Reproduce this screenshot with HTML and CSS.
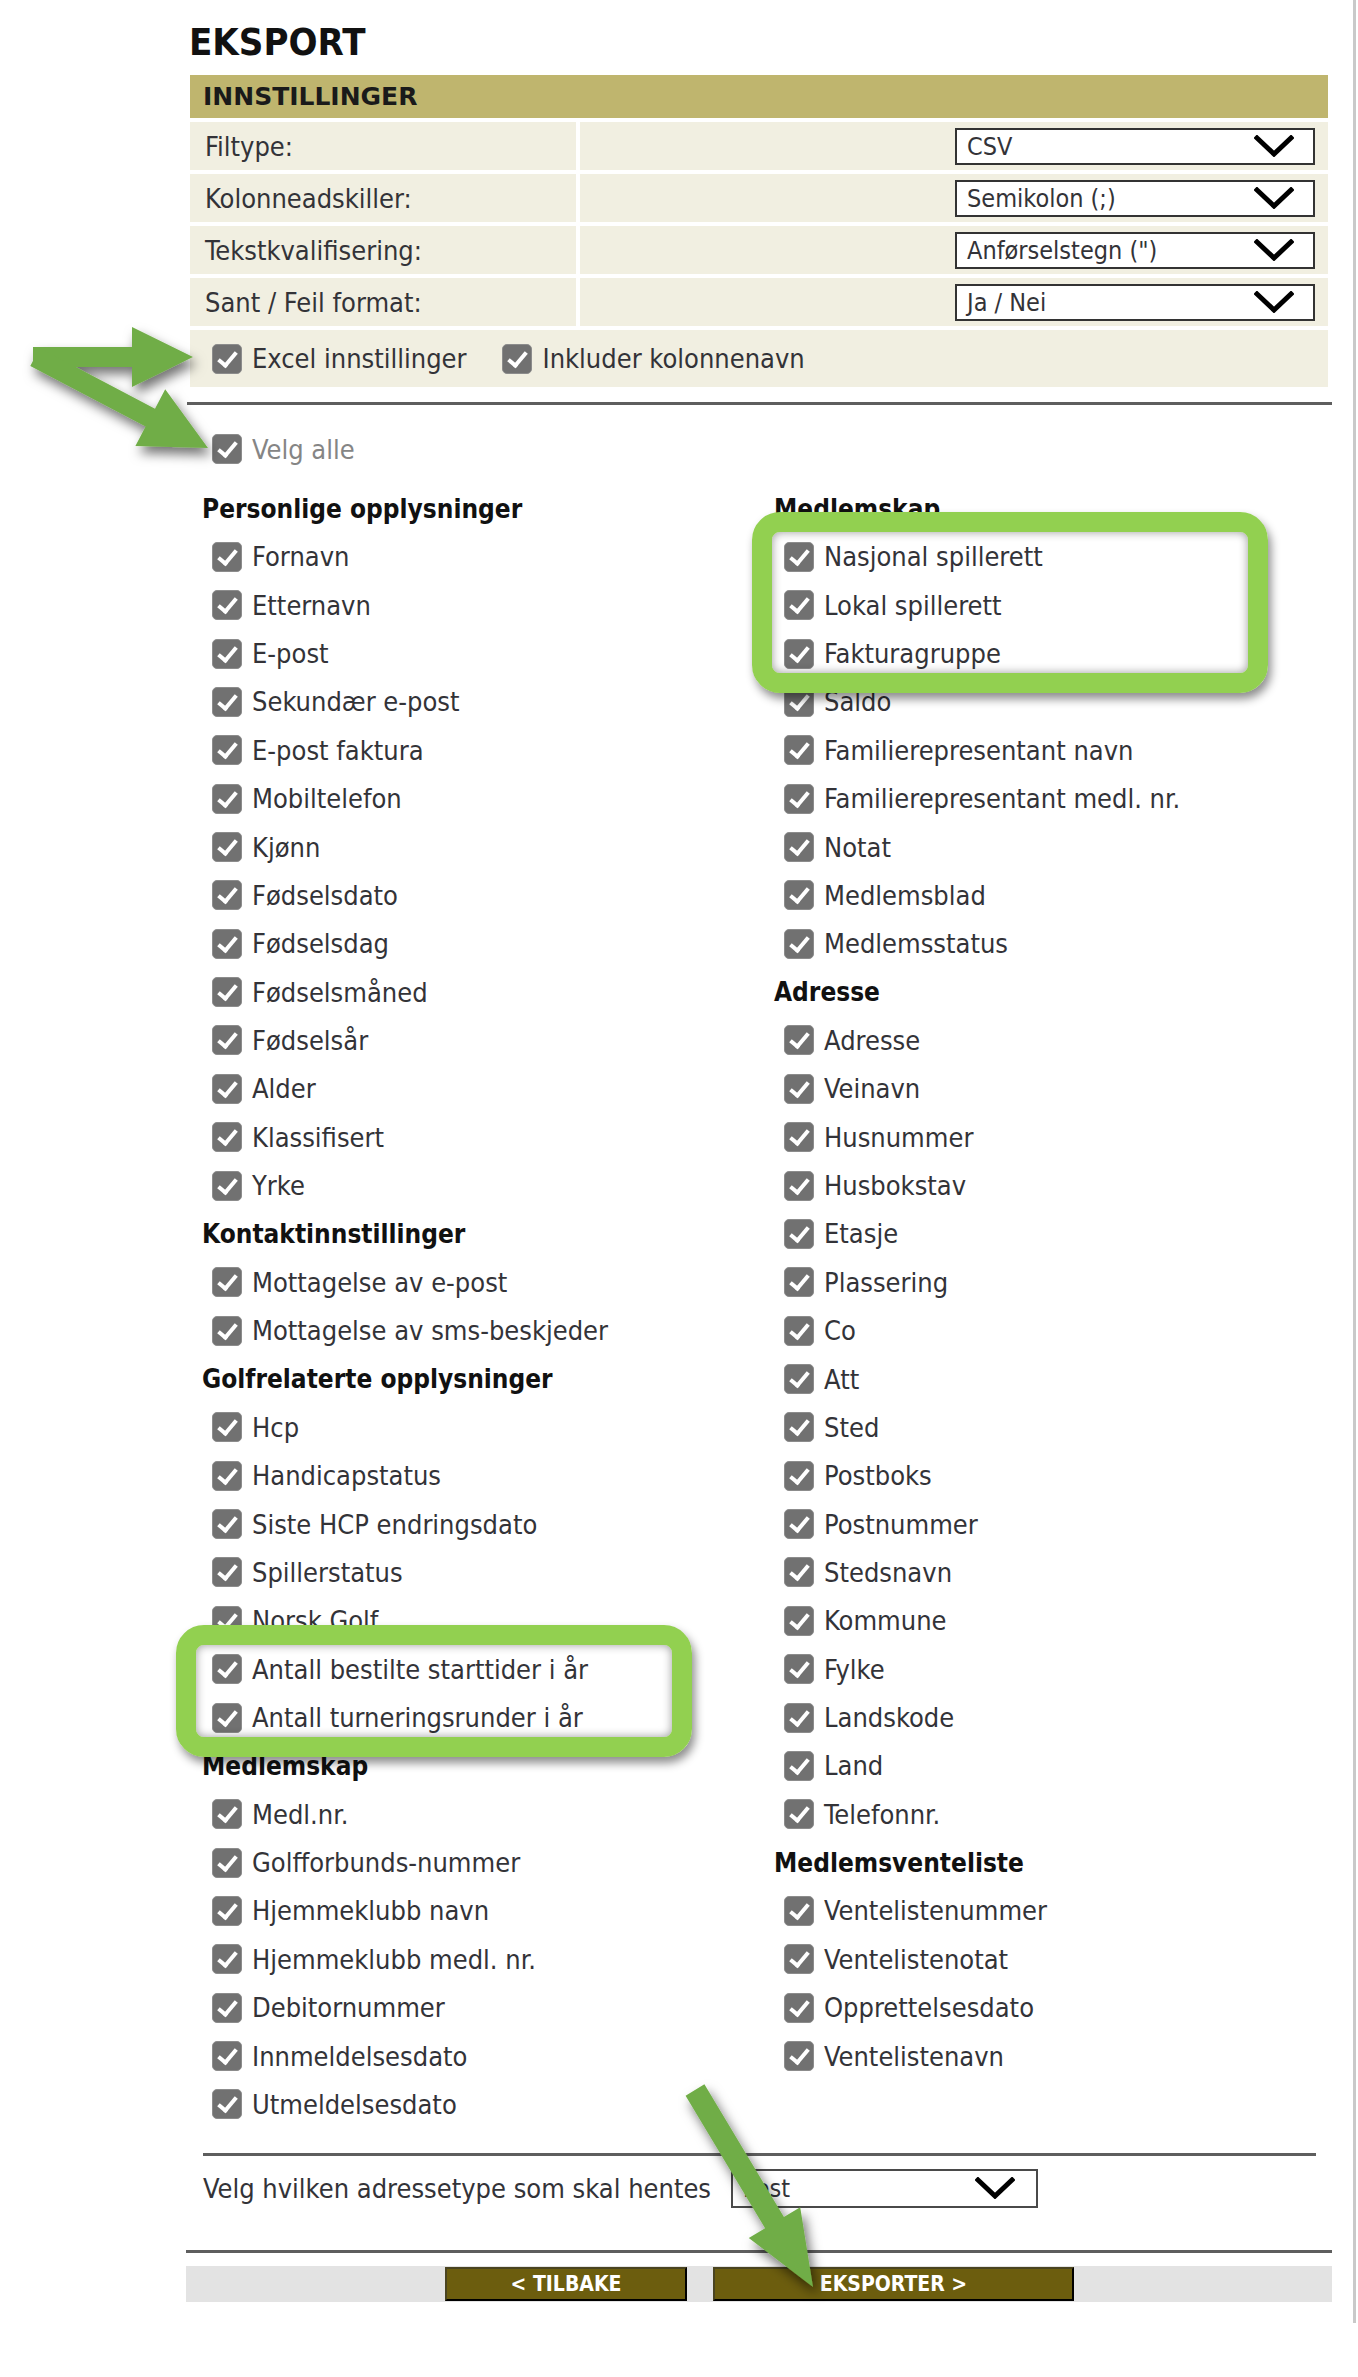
FILE: index.html
```html
<!DOCTYPE html>
<html lang="no">
<head>
<meta charset="utf-8">
<title>Eksport</title>
<link rel="stylesheet" href="styles.css">
</head>
<body>
<div class="frame">
  <div class="page">
    <h1 class="title">EKSPORT</h1>
    <div class="settings">
      <div class="s-head">INNSTILLINGER</div>
      <div class="s-label">Filtype:</div>
      <div class="s-value"><div class="select"><span>CSV</span><svg class="chev" viewBox="0 0 40 22"><polyline points="3,3 20,19 37,3"/></svg></div></div>
      <div class="s-label">Kolonneadskiller:</div>
      <div class="s-value"><div class="select"><span>Semikolon (;)</span><svg class="chev" viewBox="0 0 40 22"><polyline points="3,3 20,19 37,3"/></svg></div></div>
      <div class="s-label">Tekstkvalifisering:</div>
      <div class="s-value"><div class="select"><span>Anførselstegn (")</span><svg class="chev" viewBox="0 0 40 22"><polyline points="3,3 20,19 37,3"/></svg></div></div>
      <div class="s-label">Sant / Feil format:</div>
      <div class="s-value"><div class="select"><span>Ja / Nei</span><svg class="chev" viewBox="0 0 40 22"><polyline points="3,3 20,19 37,3"/></svg></div></div>
      <div class="s-opts">
        <div class="opt"><span class="cb"></span>Excel innstillinger</div>
        <div class="opt"><span class="cb"></span>Inkluder kolonnenavn</div>
      </div>
    </div>
    <div class="rule rule-top"></div>
    <div class="item all"><span class="cb"></span>Velg alle</div>
    <div class="cols">
      <div class="col">
        <div class="heading">Personlige opplysninger</div>
        <div class="item"><span class="cb"></span>Fornavn</div>
        <div class="item"><span class="cb"></span>Etternavn</div>
        <div class="item"><span class="cb"></span>E-post</div>
        <div class="item"><span class="cb"></span>Sekundær e-post</div>
        <div class="item"><span class="cb"></span>E-post faktura</div>
        <div class="item"><span class="cb"></span>Mobiltelefon</div>
        <div class="item"><span class="cb"></span>Kjønn</div>
        <div class="item"><span class="cb"></span>Fødselsdato</div>
        <div class="item"><span class="cb"></span>Fødselsdag</div>
        <div class="item"><span class="cb"></span>Fødselsmåned</div>
        <div class="item"><span class="cb"></span>Fødselsår</div>
        <div class="item"><span class="cb"></span>Alder</div>
        <div class="item"><span class="cb"></span>Klassifisert</div>
        <div class="item"><span class="cb"></span>Yrke</div>
        <div class="heading">Kontaktinnstillinger</div>
        <div class="item"><span class="cb"></span>Mottagelse av e-post</div>
        <div class="item"><span class="cb"></span>Mottagelse av sms-beskjeder</div>
        <div class="heading">Golfrelaterte opplysninger</div>
        <div class="item"><span class="cb"></span>Hcp</div>
        <div class="item"><span class="cb"></span>Handicapstatus</div>
        <div class="item"><span class="cb"></span>Siste HCP endringsdato</div>
        <div class="item"><span class="cb"></span>Spillerstatus</div>
        <div class="item"><span class="cb"></span>Norsk Golf</div>
        <div class="item"><span class="cb"></span>Antall bestilte starttider i år</div>
        <div class="item"><span class="cb"></span>Antall turneringsrunder i år</div>
        <div class="heading">Medlemskap</div>
        <div class="item"><span class="cb"></span>Medl.nr.</div>
        <div class="item"><span class="cb"></span>Golfforbunds-nummer</div>
        <div class="item"><span class="cb"></span>Hjemmeklubb navn</div>
        <div class="item"><span class="cb"></span>Hjemmeklubb medl. nr.</div>
        <div class="item"><span class="cb"></span>Debitornummer</div>
        <div class="item"><span class="cb"></span>Innmeldelsesdato</div>
        <div class="item"><span class="cb"></span>Utmeldelsesdato</div>
      </div>
      <div class="col">
        <div class="heading">Medlemskap</div>
        <div class="item"><span class="cb"></span>Nasjonal spillerett</div>
        <div class="item"><span class="cb"></span>Lokal spillerett</div>
        <div class="item"><span class="cb"></span>Fakturagruppe</div>
        <div class="item"><span class="cb"></span>Saldo</div>
        <div class="item"><span class="cb"></span>Familierepresentant navn</div>
        <div class="item"><span class="cb"></span>Familierepresentant medl. nr.</div>
        <div class="item"><span class="cb"></span>Notat</div>
        <div class="item"><span class="cb"></span>Medlemsblad</div>
        <div class="item"><span class="cb"></span>Medlemsstatus</div>
        <div class="heading">Adresse</div>
        <div class="item"><span class="cb"></span>Adresse</div>
        <div class="item"><span class="cb"></span>Veinavn</div>
        <div class="item"><span class="cb"></span>Husnummer</div>
        <div class="item"><span class="cb"></span>Husbokstav</div>
        <div class="item"><span class="cb"></span>Etasje</div>
        <div class="item"><span class="cb"></span>Plassering</div>
        <div class="item"><span class="cb"></span>Co</div>
        <div class="item"><span class="cb"></span>Att</div>
        <div class="item"><span class="cb"></span>Sted</div>
        <div class="item"><span class="cb"></span>Postboks</div>
        <div class="item"><span class="cb"></span>Postnummer</div>
        <div class="item"><span class="cb"></span>Stedsnavn</div>
        <div class="item"><span class="cb"></span>Kommune</div>
        <div class="item"><span class="cb"></span>Fylke</div>
        <div class="item"><span class="cb"></span>Landskode</div>
        <div class="item"><span class="cb"></span>Land</div>
        <div class="item"><span class="cb"></span>Telefonnr.</div>
        <div class="heading">Medlemsventeliste</div>
        <div class="item"><span class="cb"></span>Ventelistenummer</div>
        <div class="item"><span class="cb"></span>Ventelistenotat</div>
        <div class="item"><span class="cb"></span>Opprettelsesdato</div>
        <div class="item"><span class="cb"></span>Ventelistenavn</div>
      </div>
    </div>
    <div class="rule rule-mid"></div>
    <div class="addr">
      <span>Velg hvilken adressetype som skal hentes</span>
      <div class="select select-small"><span>Post</span><svg class="chev" viewBox="0 0 40 22"><polyline points="3,3 20,19 37,3"/></svg></div>
    </div>
    <div class="rule rule-bot"></div>
    <div class="buttons">
      <button class="btn btn-back">&lt; TILBAKE</button>
      <button class="btn btn-go">EKSPORTER &gt;</button>
    </div>
  </div>
</div>

<div class="mark mark-right"></div>
<div class="mark mark-left"></div>

<svg class="arrows" width="1358" height="2377" viewBox="0 0 1358 2377">
  <defs>
    <filter id="sh" x="-20%" y="-20%" width="140%" height="140%">
      <feDropShadow dx="4" dy="7" stdDeviation="6" flood-color="#000" flood-opacity="0.55"/>
    </filter>
  </defs>
  <g fill="#70ad47" filter="url(#sh)">
    <polygon points="33,347 132,347 132,327 193,357 132,387 132,367 33,367"/>
    <polygon points="39.7,348.1 155,408.7 165.2,389.2 208,448 135.4,446 145.6,426.5 30.3,365.9"/>
    <polygon points="704.4,2084.3 783.9,2216.9 800.2,2207.2 813,2287 748.8,2238 765.1,2228.3 685.6,2095.7"/>
  </g>
</svg>
</body>
</html>
```

FILE: styles.css
```css
html, body {
  margin: 0;
  padding: 0;
  background: #ffffff;
}

body {
  position: relative;
  font-family: "DejaVu Sans Condensed", "DejaVu Sans", sans-serif;
  font-stretch: condensed;
  color: #333338;
}

.frame {
  width: 1353px;
  min-height: 2323px;
  border-right: 3px solid #c9c9c9;
}

.page {
  margin-left: 186px;
  width: 1146px;
  padding-top: 20px;
}

.title {
  margin: 0 0 11px 3px;
  font-size: 38px;
  line-height: 44px;
  font-weight: bold;
  color: #111111;
}

/* settings table */
.settings {
  display: grid;
  grid-template-columns: 386px 1fr;
  gap: 4px;
  margin: 0 4px;
}

.s-head {
  grid-column: 1 / -1;
  height: 43px;
  background: #bfb56e;
  display: flex;
  align-items: center;
  padding-left: 13px;
  font-family: "DejaVu Sans", sans-serif;
  font-stretch: normal;
  font-size: 25px;
  font-weight: bold;
  color: #1a1a1a;
}

.s-label {
  height: 48px;
  background: #f1efe1;
  display: flex;
  align-items: center;
  padding-left: 15px;
  font-size: 27px;
}

.s-value {
  height: 48px;
  background: #f1efe1;
  display: flex;
  align-items: center;
  justify-content: flex-end;
  padding-right: 13px;
}

.select {
  width: 360px;
  height: 37px;
  box-sizing: border-box;
  border: 2px solid #333333;
  background: #ffffff;
  display: flex;
  align-items: center;
  justify-content: space-between;
  padding: 0 19px 0 10px;
  font-size: 25px;
  color: #333338;
}

.chev {
  width: 40px;
  height: 22px;
  flex: none;
}

.chev polyline {
  fill: none;
  stroke: #000000;
  stroke-width: 5;
  stroke-linecap: square;
  stroke-linejoin: miter;
}

.s-opts {
  grid-column: 1 / -1;
  height: 57px;
  background: #f1efe1;
  display: flex;
  align-items: center;
  padding-left: 22px;
  gap: 36px;
}

.opt {
  display: flex;
  align-items: center;
  gap: 10px;
  font-size: 27px;
}

/* checkbox */
.cb {
  width: 30px;
  height: 30px;
  flex: none;
  box-sizing: border-box;
  background: #717171;
  border: 1px solid #8c8c8c;
  border-radius: 5px;
  position: relative;
}

.cb::after {
  content: "";
  position: absolute;
  left: 9px;
  top: 3px;
  width: 7px;
  height: 15px;
  border: solid #ffffff;
  border-width: 0 4px 4px 0;
  transform: rotate(40deg);
}

/* rules */
.rule {
  height: 3px;
  background: #5e5e5e;
}

.rule-top {
  margin-top: 15px;
  margin-left: 1px;
}

.rule-mid {
  margin-top: 24px;
  margin-left: 17px;
  width: 1113px;
}

.rule-bot {
  margin-top: 42px;
}

/* lists */
.item {
  height: 48.36px;
  display: flex;
  align-items: center;
  gap: 10px;
  padding-left: 10px;
  font-size: 27px;
  white-space: nowrap;
}

.all {
  margin-top: 20px;
  padding-left: 26px;
  color: #858585;
}

.cols {
  display: grid;
  grid-template-columns: 572px 1fr;
  margin-top: 11px;
  padding-left: 16px;
}

.heading {
  height: 48.36px;
  display: flex;
  align-items: center;
  font-size: 26px;
  font-weight: bold;
  color: #111111;
  white-space: nowrap;
}

/* address type */
.addr {
  margin-top: 13px;
  height: 39px;
  display: flex;
  align-items: center;
  gap: 20px;
  padding-left: 17px;
  font-size: 27px;
}

.select-small {
  width: 307px;
  height: 39px;
  border: 2px solid #4a4a4a;
  padding-right: 21px;
}

/* buttons */
.buttons {
  margin-top: 13px;
  height: 36px;
  background: #e3e3e3;
  display: flex;
  align-items: center;
  gap: 26px;
  padding-left: 259px;
}

.btn {
  height: 34px;
  box-sizing: border-box;
  background: #6c5d0e;
  color: #ffffff;
  font-family: "DejaVu Sans Condensed", "DejaVu Sans", sans-serif;
  font-stretch: condensed;
  font-weight: bold;
  font-size: 21px;
  border: 2px solid;
  border-color: #4a4420 #000000 #000000 #4a4420;
  padding: 0;
  cursor: pointer;
}

.btn-back {
  width: 242px;
}

.btn-go {
  width: 361px;
}

/* annotation overlays */
.mark {
  position: absolute;
  box-sizing: border-box;
  border: 20px solid #92d050;
  border-radius: 28px;
  box-shadow: 3px 6px 10px rgba(0, 0, 0, 0.45), inset 0 0 10px rgba(0, 0, 0, 0.4);
  pointer-events: none;
}

.mark-right {
  left: 752px;
  top: 512px;
  width: 516px;
  height: 181px;
}

.mark-left {
  left: 176px;
  top: 1625px;
  width: 516px;
  height: 132px;
}

.arrows {
  position: absolute;
  left: 0;
  top: 0;
  pointer-events: none;
  overflow: visible;
}
```
